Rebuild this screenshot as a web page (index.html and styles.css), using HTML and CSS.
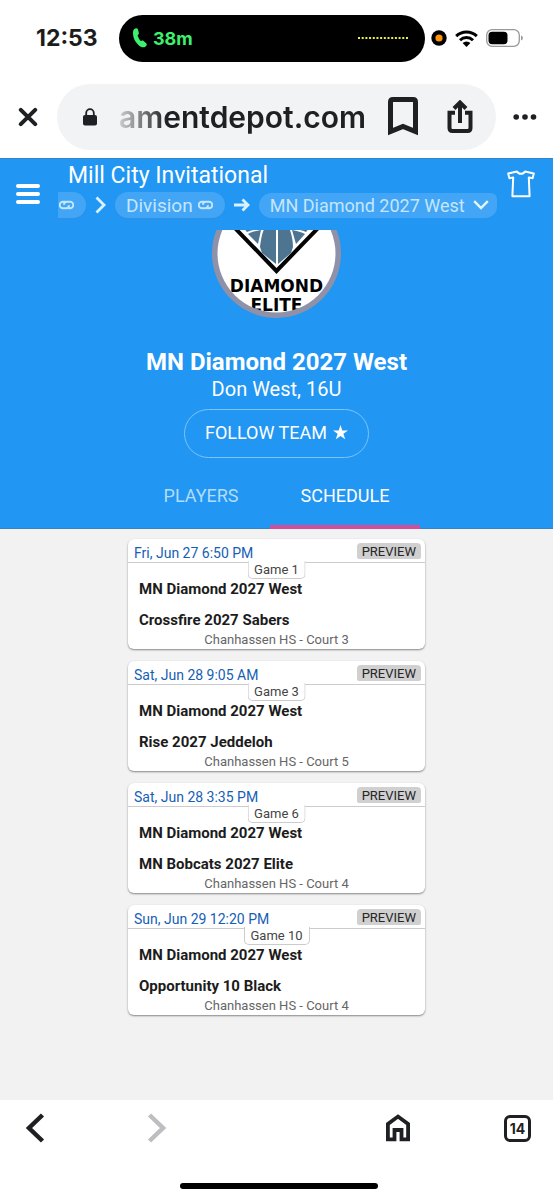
FILE: index.html
```html
<!DOCTYPE html>
<html lang="en">
<head>
<meta charset="utf-8">
<meta name="viewport" content="width=device-width, initial-scale=1">
<title>Mill City Invitational</title>
<link rel="stylesheet" href="styles.css">
</head>
<body>
<div class="status">
  <span class="clock">12:53</span>
  <div class="island">
    <svg class="phone" width="14" height="20" viewBox="0 0 14 20"><path d="M1 1.200C3 0 4.300 0 5 1.500l.8 3.300c.2 1-.1 1.600-1.200 2.500.6 2.300 1.500 4 3.200 5.700 1-.7 1.800-.8 2.600-.2l2.800 2.400c1 1 .8 2.300-.8 3.500-1.900 1.300-4.500.6-7.200-2C1.500 13.200.1 9.500 0 5.500 0 3.500.2 2 1 1.200z" fill="#3df06f"/></svg>
    <span class="duration">38m</span>
    <svg class="wave" width="52" height="4" viewBox="0 0 52 4"><path d="M1 2H51" stroke="#e9f23d" stroke-width="2" stroke-dasharray="2 1.690"/></svg>
  </div>
  <div class="signals">
    <svg width="16" height="16" viewBox="0 0 16 16"><circle cx="8" cy="8" r="7.700" fill="#000"/><circle cx="8" cy="8" r="3.600" fill="#ff9408"/></svg>
    <svg width="23" height="17" viewBox="0 0 23 17"><g fill="none" stroke="#000" stroke-width="3"><path d="M1.200 6.200a14.800 14.800 0 0 1 20.600 0"/><path d="M5 10.200a9.300 9.300 0 0 1 13 0"/></g><path d="M7.600 13a5.600 5.600 0 0 1 7.800 0l-3.900 4z"/></svg>
    <svg width="38" height="18" viewBox="0 0 38 18"><rect x=".7" y=".7" width="32.600" height="16.600" rx="5.500" fill="none" stroke="#999" stroke-width="1.300"/><rect x="2.500" y="2.800" width="19" height="12.400" rx="3.600"/><path d="M35 6.500c2.500.8 2.500 4.200 0 5z" fill="#999"/></svg>
  </div>
</div>

<div class="browser-bar">
  <button class="bare" aria-label="Close"><svg width="20" height="20" viewBox="0 0 20 20"><path d="M2.800 2.800l14.400 14.400M17.200 2.800L2.800 17.200" stroke="#1f2023" stroke-width="4" stroke-linecap="round"/></svg></button>
  <div class="address">
    <svg class="lock" width="14" height="18" viewBox="0 0 14 18"><path d="M3.200 8V5a3.800 3.800 0 0 1 7.600 0v3" fill="none" stroke="#1f2023" stroke-width="1.800"/><rect y="7" width="14" height="10.500" rx="2" fill="#1f2023"/></svg>
    <input class="url" type="text" aria-label="Address" value="amentdepot.com">
    <button class="bare bookmark" aria-label="Bookmark"><svg width="30" height="40" viewBox="0 0 30 40"><path d="M2.500 34.500V5q0-2.500 2.500-2.500h20q2.500 0 2.500 2.500v29.500L15 29.500z" fill="none" stroke="#1f2023" stroke-width="5"/></svg></button>
    <button class="bare share" aria-label="Share"><svg width="26" height="34" viewBox="0 0 26 34"><path d="M8 12.800H2.500V28q0 3 3 3h15q3 0 3-3V12.800H18" fill="none" stroke="#1f2023" stroke-width="4"/><path d="M13 23V3M7 8.500l6-6 6 6" fill="none" stroke="#1f2023" stroke-width="4"/></svg></button>
  </div>
  <button class="bare" aria-label="More"><svg width="24" height="6" viewBox="0 0 24 6"><g fill="#1f2023"><circle cx="3.200" cy="3" r="2.800"/><circle cx="12" cy="3" r="2.800"/><circle cx="20.500" cy="3" r="2.800"/></g></svg></button>
</div>

<header class="app-header">
  <button class="bare menu" aria-label="Menu"><svg width="24" height="22" viewBox="0 0 24 22"><path d="M2 3h20M2 11h20M2 19h20" stroke="#fff" stroke-width="4" stroke-linecap="round"/></svg></button>
  <div class="heading">
    <h1 class="event">Mill City Invitational</h1>
    <nav class="crumbs">
      <a class="chip chip-cut" href="#event" aria-label="Event"><svg width="15" height="10" viewBox="0 0 15 10"><path d="M10 5.200C10 7 9 8.300 7 8.300H4A3.200 3.200 0 0 1 4 1.700h2.500M5 4.800C5 3 6 1.700 8 1.700h3a3.200 3.200 0 0 1 0 6.600H9.500" fill="none" stroke="#c4e6ff" stroke-width="1.900"/></svg></a>
      <svg class="sep" width="11" height="18" viewBox="0 0 11 18"><path d="M1.500 1.500L9 9l-7.500 7.500" fill="none" stroke="#d8f2ff" stroke-width="2.800"/></svg>
      <a class="chip" href="#division">Division <svg width="15" height="10" viewBox="0 0 15 10"><path d="M10 5.200C10 7 9 8.300 7 8.300H4A3.200 3.200 0 0 1 4 1.700h2.500M5 4.800C5 3 6 1.700 8 1.700h3a3.200 3.200 0 0 1 0 6.600H9.500" fill="none" stroke="#c4e6ff" stroke-width="1.900"/></svg></a>
      <svg class="sep" width="16" height="14" viewBox="0 0 16 14"><path d="M0 7h13.500M8.500 1.500L14 7l-5.500 5.500" fill="none" stroke="#d8f2ff" stroke-width="2.800"/></svg>
      <span class="picker">
        <select class="team-select" aria-label="Team"><option>MN Diamond 2027 West</option></select>
        <svg class="caret" width="16" height="10" viewBox="0 0 16 10"><path d="M1.200 1.200L8 8l6.800-6.800" fill="none" stroke="#e4f5ff" stroke-width="2.400"/></svg>
      </span>
    </nav>
  </div>
  <button class="bare shirt" aria-label="Teams"><svg width="28" height="28" viewBox="0 0 28 28"><path d="M10 1.500c1.500 3 6.500 3 8 0L26.800 3.500 25.600 8.300l-3.800-.9.800 18.800H5.400l.8-18.800-3.800.9L1.200 3.500z" fill="none" stroke="#fff" stroke-width="2" stroke-linejoin="round"/></svg></button>
</header>

<section class="team">
  <svg class="logo" width="129" height="129" viewBox="0 0 129 129" role="img" aria-label="Diamond Elite">
    <defs><clipPath id="disc"><circle cx="64.500" cy="64.500" r="59"/></clipPath></defs>
    <circle cx="64.500" cy="64.500" r="64.500" fill="#8e91a8"/>
    <circle cx="64.500" cy="64.500" r="59" fill="#fff"/>
    <g clip-path="url(#disc)">
      <path d="M20 36L64.500 82 109 36" fill="none" stroke="#050505" stroke-width="4"/>
      <path d="M53 38h11v37L50 64l-2-6c1-8 2-14 5-20zM66 38h11c2 6 4 12 4 20l-2 6-13 11zM36 45c3-2 8-3 13-4l-3 14zM80 41c5 1 10 2 13 4L84 55z" fill="#4d7592"/>
      <path d="M31 38h21v2c-7 0-12 1-17 3zM78 38h20l-4 5c-5-2-9-3-16-3z" fill="#4d7592"/>
      <text class="logo-text" x="64.500" y="103" text-anchor="middle">DIAMOND</text>
      <text class="logo-text" x="64.500" y="122" text-anchor="middle">ELITE</text>
    </g>
  </svg>
  <h2 class="team-name">MN Diamond 2027 West</h2>
  <p class="coach">Don West, 16U</p>
  <button class="follow">FOLLOW TEAM <svg width="15" height="15" viewBox="0 0 15 15"><path d="M7.500 0l1.800 5.400H15l-4.600 3.400 1.800 5.500-4.700-3.400-4.700 3.400 1.800-5.500L0 5.400h5.700z" fill="#fff"/></svg></button>
</section>

<nav class="tabs" role="tablist">
  <button class="tab" role="tab" aria-selected="false">PLAYERS</button>
  <button class="tab active" role="tab" aria-selected="true">SCHEDULE</button>
</nav>

<main class="games">
  <article class="game">
    <div class="game-head"><time>Fri, Jun 27 6:50 PM</time><button class="preview">PREVIEW</button></div>
    <span class="tag">Game 1</span>
    <p class="side">MN Diamond 2027 West</p><p class="side">Crossfire 2027 Sabers</p>
    <p class="court">Chanhassen HS - Court 3</p>
  </article>
  <article class="game">
    <div class="game-head"><time>Sat, Jun 28 9:05 AM</time><button class="preview">PREVIEW</button></div>
    <span class="tag">Game 3</span>
    <p class="side">MN Diamond 2027 West</p><p class="side">Rise 2027 Jeddeloh</p>
    <p class="court">Chanhassen HS - Court 5</p>
  </article>
  <article class="game">
    <div class="game-head"><time>Sat, Jun 28 3:35 PM</time><button class="preview">PREVIEW</button></div>
    <span class="tag">Game 6</span>
    <p class="side">MN Diamond 2027 West</p><p class="side">MN Bobcats 2027 Elite</p>
    <p class="court">Chanhassen HS - Court 4</p>
  </article>
  <article class="game">
    <div class="game-head"><time>Sun, Jun 29 12:20 PM</time><button class="preview">PREVIEW</button></div>
    <span class="tag">Game 10</span>
    <p class="side">MN Diamond 2027 West</p><p class="side">Opportunity 10 Black</p>
    <p class="court">Chanhassen HS - Court 4</p>
  </article>
</main>

<footer class="toolbar">
  <div class="tools">
    <button class="bare" aria-label="Back"><svg width="20" height="30" viewBox="0 0 20 30"><path d="M16.500 2L3 15l13.500 13" fill="none" stroke="#1f2023" stroke-width="4.500"/></svg></button>
    <button class="bare forward" aria-label="Forward"><svg width="20" height="30" viewBox="0 0 20 30"><path d="M3.500 2L17 15 3.500 28" fill="none" stroke="#bdbec1" stroke-width="4.500"/></svg></button>
    <button class="bare home" aria-label="Home"><svg width="24" height="28" viewBox="0 0 24 28"><path d="M1.900 25.300V10L12 2.500 22.100 10v15.300h-6.600V16H8.500v9.300z" fill="none" stroke="#1f2023" stroke-width="3.800"/></svg></button>
    <button class="bare count" aria-label="14 open tabs">14</button>
  </div>
  <div class="home-bar"></div>
</footer>
</body>
</html>
```

FILE: styles.css
```css
* { box-sizing: border-box; }

body {
  margin: 0;
  min-height: 100vh;
  display: flex;
  flex-direction: column;
  background: #fff;
  font-family: Roboto, "Liberation Sans", sans-serif;
  color: #1c1c1c;
}

h1, h2, p { margin: 0; }
svg { display: block; flex: none; }

button { font-family: inherit; cursor: pointer; }

.bare {
  border: 0;
  padding: 0;
  background: none;
  flex: none;
}

/* Phone status bar */
.status {
  display: flex;
  align-items: center;
  height: 76px;
  padding: 0 29px 0 36px;
  font-family: Inter, sans-serif;
}
.clock { width: 83px; font-size: 23px; font-weight: 700; }
.island {
  flex: 1;
  display: flex;
  align-items: center;
  height: 47px;
  padding: 0 16px 0 14px;
  border-radius: 24px;
  background: #000;
}
.duration { margin-left: 6px; font-size: 18px; font-weight: 700; color: #3df06f; }
.wave { margin-left: auto; }
.signals { display: flex; align-items: center; gap: 8px; margin-left: 6px; }

/* Browser address bar */
.browser-bar {
  display: flex;
  align-items: center;
  gap: 17px;
  height: 82px;
  padding: 0 16px 0 18px;
}
.address {
  flex: 1;
  min-width: 0;
  display: flex;
  align-items: center;
  height: 66px;
  padding: 0 23px 0 26px;
  border-radius: 33px;
  background: #f1f3f5;
}
.browser-bar .address { margin-left: 2px; }
.url {
  flex: 1;
  min-width: 0;
  height: 48px;
  margin-left: 22px;
  padding: 0;
  border: 0;
  background: none;
  font-family: Inter, sans-serif;
  font-size: 30px;
  font-weight: 600;
  color: #1f2023;
  -webkit-mask-image: linear-gradient(90deg, transparent -10px, #000 48px);
  mask-image: linear-gradient(90deg, transparent -10px, #000 48px);
}
.share { margin-left: 29px; }

/* App header */
.app-header {
  display: flex;
  height: 72px;
  padding: 0 18px 0 16px;
  background: #2196f3;
  box-shadow: inset 0 1px 0 #3587c9;
}
.menu { align-self: center; }
.heading { flex: 1; min-width: 0; margin-left: 18px; padding-top: 3px; }
.event {
  padding-left: 10px;
  font-size: 23px;
  line-height: 29px;
  font-weight: 400;
  color: #fff;
}
.crumbs { display: flex; align-items: center; gap: 9px; margin-top: 2px; }
.chip {
  display: flex;
  align-items: center;
  gap: 5px;
  height: 26px;
  padding: 0 12px 0 11px;
  border-radius: 13px;
  background: #42a5f5;
  box-shadow: 0 1px 1px #348fe0;
  color: #c4e6ff;
  font-size: 19px;
  text-decoration: none;
}
.chip-cut { padding-left: 1px; border-radius: 0 13px 13px 0; }
.picker { position: relative; }
.team-select {
  appearance: none;
  height: 25px;
  margin: 0;
  padding: 0 32px 0 11px;
  border: 0;
  border-radius: 13px 6px 12px 13px;
  background: #42a5f5;
  color: #c4e6ff;
  font-family: inherit;
  font-size: 18px;
}
.caret { position: absolute; right: 8px; top: 7px; pointer-events: none; }
.shirt { align-self: flex-start; margin-top: 12px; }

/* Team summary */
.team {
  display: flex;
  flex-direction: column;
  align-items: center;
  overflow: hidden;
  padding-bottom: 8px;
  background: #2196f3;
  color: #fff;
}
.logo { margin-top: -41px; }
.logo-text { font: 700 17px "DejaVu Sans", sans-serif; }
.team-name { margin-top: 28px; font-size: 24px; line-height: 32px; font-weight: 700; }
.coach { font-size: 20px; line-height: 22px; }
.follow {
  display: flex;
  align-items: center;
  gap: 6px;
  height: 49px;
  margin-top: 9px;
  padding: 0 20px 2px;
  border: 1px solid #7cc4fa;
  border-radius: 25px;
  background: none;
  color: #fff;
  font-size: 18px;
}

/* Tabs */
.tabs {
  display: flex;
  justify-content: center;
  height: 63px;
  background: #2196f3;
  box-shadow: inset 0 -1px 0 #3b84c0;
}
.tab {
  padding: 0 31px;
  border: 0;
  border-bottom: 4px solid transparent;
  background: none;
  color: #b3dcfb;
  font-size: 18px;
}
.tab.active { color: #fff; border-bottom-color: #d34e99; }

/* Schedule */
.games {
  flex: 1;
  display: flex;
  flex-direction: column;
  align-items: center;
  gap: 12px;
  padding: 10px 16px;
  background: #f2f2f2;
}
.game {
  position: relative;
  width: 100%;
  max-width: 297px;
  padding-bottom: 2px;
  border-radius: 6px;
  background: #fff;
  box-shadow: 0 1px 2px rgba(0, 0, 0, 0.45);
}
.game-head {
  display: flex;
  justify-content: space-between;
  align-items: flex-start;
  height: 24px;
  padding: 4px 4px 0 6px;
  border-bottom: 1px solid #ccc;
  color: #1560b4;
  font-size: 14px;
  line-height: 20px;
}
.preview {
  height: 16px;
  padding: 0 5px;
  border: 0;
  border-radius: 4px 4px 2px 2px;
  background: #d0d0d0;
  color: #262626;
  font-size: 13px;
  line-height: 18px;
}
.tag {
  position: absolute;
  top: 22px;
  left: 50%;
  transform: translateX(-50%);
  padding: 0 6px;
  border: 1px solid #ccc;
  border-top: 0;
  border-radius: 0 0 5px 5px;
  background: #fff;
  color: #444;
  font-size: 13px;
  line-height: 17px;
  white-space: nowrap;
}
.side { padding: 0 11px; font-size: 15px; line-height: 31px; font-weight: 700; }
.game-head + .tag + .side { padding-top: 11px; }
.court {
  margin-top: -3px;
  color: #666;
  font-size: 13px;
  line-height: 14px;
  text-align: center;
}

/* Browser toolbar */
.toolbar { height: 100px; padding: 12px 22px 0 26px; background: #fff; }
.tools { display: flex; align-items: center; height: 32px; }
.forward { margin-left: 100px; }
.home { margin-left: auto; }
.count {
  width: 27px;
  height: 27px;
  margin-left: 94px;
  border: 3px solid #1f2023;
  border-radius: 6px;
  color: #1f2023;
  font-family: Inter, sans-serif;
  font-size: 14px;
  font-weight: 700;
}
.home-bar {
  width: 198px;
  height: 6px;
  margin: 39px auto 0;
  border-radius: 3px;
  background: #000;
}
```
